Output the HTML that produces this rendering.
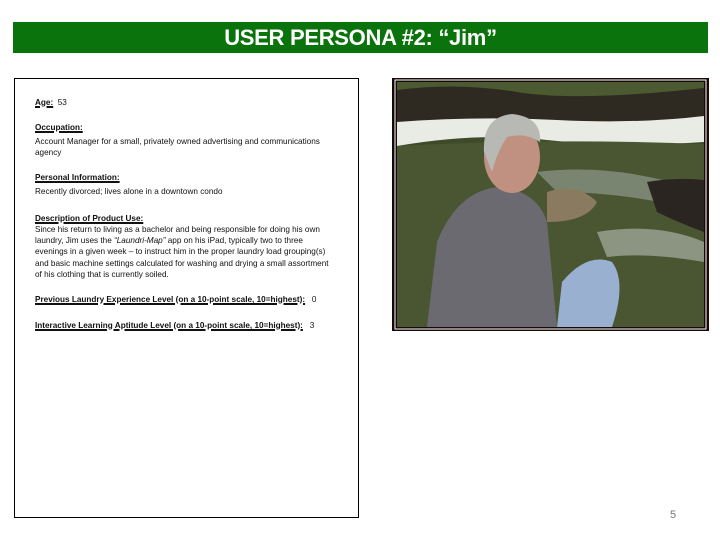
<!DOCTYPE html>
<html><head><meta charset="utf-8"><style>
body{margin:0;width:720px;height:540px;background:#fff;position:relative;overflow:hidden;font-family:"Liberation Sans",sans-serif}
.bar{position:absolute;left:13px;top:22px;width:695px;height:31px;background:#0b730b;color:#fff;text-align:center;font-weight:bold;font-size:22px;line-height:31px;letter-spacing:-0.3px}
.box{position:absolute;left:14px;top:78px;width:345px;height:440px;border:1px solid #000;box-sizing:border-box}
.t{position:absolute;left:35px;font-size:8.2px;color:#111;white-space:nowrap;line-height:11.2px}
.h{font-weight:bold;text-decoration:underline;text-decoration-thickness:2px}
.num{position:absolute;left:670px;top:509px;font-size:11px;color:#777}
</style></head><body>
<div class="bar">USER PERSONA #2: “Jim”</div>
<div class="box"></div>
<div class="t" style="top:97px"><span class="h">Age:</span>&nbsp; 53</div>
<div class="t" style="top:122px"><span class="h">Occupation:</span></div>
<div class="t" style="top:136px">Account Manager for a small, privately owned advertising and communications<br>agency</div>
<div class="t" style="top:172px"><span class="h">Personal Information:</span></div>
<div class="t" style="top:186px">Recently divorced; lives alone in a downtown condo</div>
<div class="t" style="top:213px"><span class="h">Description of Product Use:</span></div>
<div class="t" style="top:224px">Since his return to living as a bachelor and being responsible for doing his own<br>laundry, Jim uses the <i>“Laundri-Map”</i> app on his iPad, typically two to three<br>evenings in a given week – to instruct him in the proper laundry load grouping(s)<br>and basic machine settings calculated for washing and drying a small assortment<br>of his clothing that is currently soiled.</div>
<div class="t" style="top:294px"><span class="h">Previous Laundry Experience Level (on a 10-point scale, 10=highest):</span>&nbsp;&nbsp; 0</div>
<div class="t" style="top:320px"><span class="h">Interactive Learning Aptitude Level (on a 10-point scale, 10=highest):</span>&nbsp;&nbsp; 3</div>
<svg style="position:absolute;left:392px;top:78px" width="317" height="253" viewBox="0 0 317 253">
<rect width="317" height="253" fill="#150a08"/>
<rect x="3" y="2" width="311" height="249" fill="none" stroke="#fff" stroke-width="1"/>
<g transform="translate(5,4)">
<rect width="307" height="245" fill="#3f4a2a"/>
<rect width="307" height="40" fill="#2e2a22"/>
<path d="M0 8 Q60 0 120 10 T307 6 V0 H0Z" fill="#4b5a30"/>
<path d="M0 40 Q80 34 160 38 T307 34 V60 Q220 66 150 58 T0 64Z" fill="#e8ece4"/>
<path d="M0 64 Q150 56 307 62 V245 H0Z" fill="#4a5532"/>
<path d="M140 90 Q220 80 307 110 V130 Q230 110 160 110Z" fill="#9aa59a" opacity=".6"/>
<path d="M200 150 Q260 140 307 160 V180 Q250 170 210 175Z" fill="#b8c0b8" opacity=".6"/>
<path d="M250 100 Q280 95 307 98 V150 Q280 140 260 130Z" fill="#2a2520"/>
<path d="M150 110 Q180 100 200 120 Q190 140 150 140Z" fill="#8a7a60"/>
<path d="M30 245 L40 160 Q60 110 100 105 Q140 108 150 140 L160 245Z" fill="#6a6a70"/>
<path d="M160 245 L165 200 Q190 170 215 180 Q230 200 215 245Z" fill="#9ab0d0"/>
<ellipse cx="115" cy="75" rx="28" ry="36" fill="#c09080"/>
<path d="M87 70 Q85 35 115 32 Q145 35 143 60 Q128 50 110 55 Q100 70 95 90Z" fill="#b8b8b4"/>
</g>
</svg>
<div class="num">5</div>
</body></html>
